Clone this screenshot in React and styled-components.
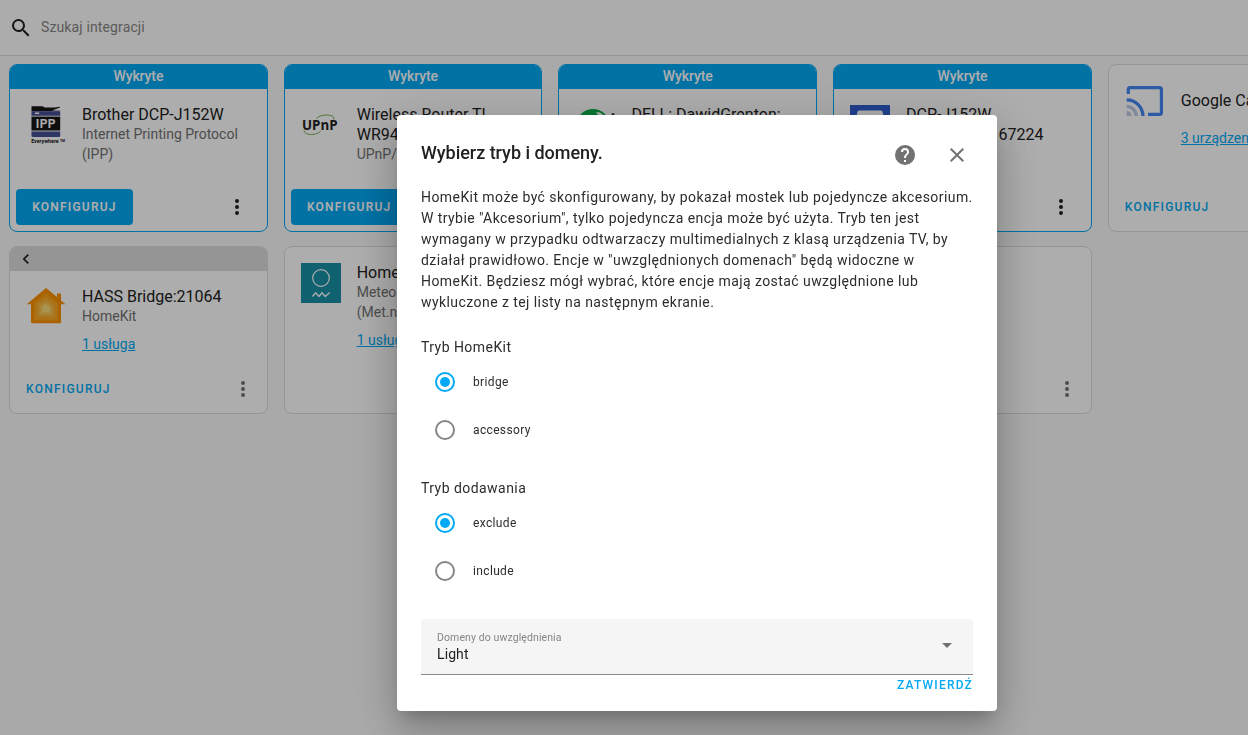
import React from 'react';
import styled, { createGlobalStyle, css } from 'styled-components';

const Global = createGlobalStyle`
  * { box-sizing: border-box; }
  html, body { margin: 0; padding: 0; height: 100%; overflow: hidden; }
  body { font-family: Roboto, "Liberation Sans", sans-serif; background: #fafafa; color: #212121; }
`;

const Page = styled.main`
  height: 735px;
  overflow: hidden;
  background: #fafafa;
`;

const SearchBar = styled.header`
  height: 56px;
  padding: 0 9px;
  display: flex;
  align-items: center;
  gap: 8px;
  background: #fefefe;
  border-bottom: 1px solid #dedede;
  font-size: 14px;
  letter-spacing: 0.13px;
  color: #868686;
`;

const SearchText = styled.span`
  padding-bottom: 2px;
`;

const Icon = styled.svg`
  display: block;
  flex: none;
  width: ${p => p.$size || 24}px;
  height: ${p => p.$size || 24}px;
  fill: ${p => p.$color || '#212121'};
`;

const Grid = styled.section`
  display: grid;
  grid-template-columns: repeat(5, 258.7px);
  grid-auto-rows: 168px;
  gap: 14px 16px;
  padding: 8px 9px;
`;

const Card = styled.article`
  display: flex;
  flex-direction: column;
  border: 1px solid ${p => (p.$discovered ? '#03a9f4' : '#dcdcdc')};
  border-radius: 8px;
  background: #fff;
  overflow: hidden;
`;

const CardHeader = styled.div`
  flex: none;
  height: 24px;
  display: flex;
  align-items: center;
  justify-content: ${p => (p.$discovered ? 'center' : 'flex-start')};
  padding: ${p => (p.$discovered ? '0 0 2px' : '0 6px')};
  background: ${p => (p.$discovered ? '#03a9f4' : '#dcdcdc')};
  color: #fff;
  font-size: 14px;
  font-weight: 500;
  letter-spacing: -0.1px;
`;

const Info = styled.div`
  display: flex;
  gap: 16px;
  padding: ${p => (p.$header ? '15px' : '16px')} 8px 0 16px;
`;

const Logo = styled.div`
  flex: none;
  width: 40px;
  height: 40px;
  svg { display: block; }
`;

const Titles = styled.div`
  align-self: ${p => (p.$top ? 'flex-start' : 'center')};
  min-width: 0;
  padding-top: 1px;
  margin-top: ${p => (p.$up ? '-1px' : '0')};
`;

const Title = styled.div`
  font-size: 16px;
  line-height: 20px;
  white-space: nowrap;
`;

const Sub = styled.div`
  margin-top: -1px;
  font-size: 14px;
  line-height: 20px;
  color: #727272;
  white-space: pre-line;
`;

const Link = styled.a`
  margin: ${p => (p.$tight ? 7 : 8)}px 0 0 72px;
  font-size: 14px;
  line-height: 20px;
  color: #03a9f4;
  text-decoration: underline;
  white-space: nowrap;
`;

const Actions = styled.div`
  min-height: 42px;
  margin-top: auto;
  display: flex;
  align-items: center;
  justify-content: space-between;
  padding: 0 ${p => (p.$discovered ? 18 : 12)}px 6px 6px;
`;

const Button = styled.button`
  height: 36px;
  border: 0;
  border-radius: 4px;
  font: 500 12px/36px Roboto, sans-serif;
  letter-spacing: 1.25px;
  white-space: nowrap;
  ${p =>
    p.$raised
      ? css`width: 117px; padding: 0; background: #03a9f4; color: #fff; font-weight: 600; letter-spacing: 1.2px;`
      : css`padding: 0 10px; background: transparent; color: #03a9f4;`}
`;

const Scrim = styled.div`
  position: fixed;
  inset: 0;
  padding: 115px 0 0 397px;
  background: rgba(0, 0, 0, 0.32);
`;

const Dialog = styled.section`
  width: 600px;
  height: 596px;
  padding: 0 24px;
  border-radius: 4px;
  background: #fff;
  box-shadow: 0 11px 15px -7px rgba(0, 0, 0, 0.2), 0 24px 38px 3px rgba(0, 0, 0, 0.14),
    0 9px 46px 8px rgba(0, 0, 0, 0.12);
  display: flex;
  flex-direction: column;
`;

const DialogHeader = styled.div`
  display: flex;
  align-items: center;
  gap: 28px;
  height: 72px;
  padding: 8px 4px 0 0;
`;

const DialogTitle = styled.h2`
  flex: 1;
  margin: 0 0 4px;
  font-size: 18px;
  font-weight: 500;
  line-height: 24px;
  letter-spacing: -0.03px;
`;

const Description = styled.p`
  margin: 0;
  font-size: 14px;
  line-height: 21px;
  letter-spacing: 0.432px;
  white-space: pre;
  color: #2c2c2c;
`;

const Group = styled.fieldset`
  margin: ${p => p.$gap}px 0 0;
  padding: 0;
  border: 0;
  color: #2c2c2c;
`;

const Legend = styled.div`
  height: 24px;
  padding-top: 1px;
  font-size: 14px;
  line-height: 24px;
  letter-spacing: 0.45px;
`;

const Option = styled.label`
  height: 48px;
  display: flex;
  align-items: center;
  gap: 18px;
  padding-left: 14px;
  font-size: 12px;
  letter-spacing: 0.35px;
`;

const Radio = styled.span`
  width: 20px;
  height: 20px;
  border: 2px solid ${p => (p.$on ? '#03a9f4' : '#868686')};
  border-radius: 50%;
  display: grid;
  place-items: center;
  &::after {
    content: '';
    width: 10px;
    height: 10px;
    border-radius: 50%;
    background: ${p => (p.$on ? '#03a9f4' : 'transparent')};
  }
`;

const Select = styled.div`
  margin-top: 24px;
  height: 56px;
  display: flex;
  align-items: center;
  justify-content: space-between;
  padding: 0 14px 3px 16px;
  background: #f5f5f5;
  border-bottom: 1px solid #8a8a8a;
  border-radius: 4px 4px 0 0;
`;

const SelectLabel = styled.div`
  padding-top: 4px;
  font-size: 10.5px;
  line-height: 14px;
  letter-spacing: 0.1px;
  color: #868686;
`;

const SelectValue = styled.div`
  font-size: 14px;
  line-height: 19px;
  letter-spacing: 0.1px;
`;

const Submit = styled.button`
  align-self: flex-end;
  margin: 0;
  padding: 0;
  border: 0;
  background: none;
  color: #03a9f4;
  font: 500 12px/20px Roboto, sans-serif;
  letter-spacing: 1.2px;
`;

const paths = {
  search:
    'M9.5,3A6.5,6.5 0 0,1 16,9.5C16,11.11 15.41,12.59 14.44,13.73L14.71,14H15.5L20.5,19L19,20.5L14,15.5V14.71L13.73,14.44C12.59,15.41 11.11,16 9.5,16A6.5,6.5 0 0,1 3,9.5A6.5,6.5 0 0,1 9.5,3M9.5,5C7,5 5,7 5,9.5C5,12 7,14 9.5,14C12,14 14,12 14,9.5C14,7 12,5 9.5,5Z',
  close:
    'M19,6.41L17.59,5L12,10.59L6.41,5L5,6.41L10.59,12L5,17.59L6.41,19L12,13.41L17.59,19L19,17.59L13.41,12L19,6.41Z',
  help:
    'M15.07,11.25L14.17,12.17C13.45,12.89 13,13.5 13,15H11V14.5C11,13.39 11.45,12.39 12.17,11.67L13.41,10.41C13.78,10.05 14,9.55 14,9C14,7.89 13.1,7 12,7A2,2 0 0,0 10,9H8A4,4 0 0,1 12,5A4,4 0 0,1 16,9C16,9.88 15.64,10.67 15.07,11.25M13,19H11V17H13M12,2A10,10 0 0,0 2,12A10,10 0 0,0 12,22A10,10 0 0,0 22,12C22,6.47 17.5,2 12,2Z',
  back: 'M15.41,16.58L10.83,12L15.41,7.41L14,6L8,12L14,18L15.41,16.58Z',
  dots:
    'M12,16A2,2 0 0,1 14,18A2,2 0 0,1 12,20A2,2 0 0,1 10,18A2,2 0 0,1 12,16M12,10A2,2 0 0,1 14,12A2,2 0 0,1 12,14A2,2 0 0,1 10,12A2,2 0 0,1 12,10M12,4A2,2 0 0,1 14,6A2,2 0 0,1 12,8A2,2 0 0,1 10,6A2,2 0 0,1 12,4Z',
  down: 'M7,10L12,15L17,10H7Z',
};

const Glyph = ({ name, ...rest }) => (
  <Icon viewBox="0 0 24 24" {...rest}>
    <path d={paths[name]} />
  </Icon>
);

const logoFont = 'Roboto, sans-serif';

const logos = {
  ipp: (
    <svg width="40" height="42" viewBox="0 0 40 42">
      <path d="M5.5 2.2h11l2.2 1.3L29 3.5l4.5-.7.5.6-8 3 8 .3v.6H5.5z" fill="#161616" />
      <path d="M5.5 7.2h28.7v5H5.5z" fill="#454d93" />
      <path d="M9 9.2h4.2" stroke="#fff" strokeWidth="1.4" />
      <path d="M5.5 12.2h28.7" stroke="#ddd" strokeWidth="1" />
      <path d="M5.5 12.8h28.7v13.7H5.5z" fill="#161616" />
      <path d="M5.5 27.6h28.7v3.9a1.5 1.5 0 0 1-1.5 1.5H7a1.5 1.5 0 0 1-1.5-1.5z" fill="#454d93" />
      <text x="19.9" y="23.5" textAnchor="middle" fontFamily={logoFont} fontWeight="700" fontSize="12" letterSpacing="0.4" fill="#fff">IPP</text>
      <text x="5.2" y="39" fontFamily={logoFont} fontWeight="700" fontSize="5.8" textLength="27.5" lengthAdjust="spacingAndGlyphs" fill="#111">Everywhere</text>
      <text x="34" y="37.5" fontFamily={logoFont} fontWeight="700" fontSize="3" textLength="5" lengthAdjust="spacingAndGlyphs" fill="#111">TM</text>
    </svg>
  ),
  upnp: (
    <svg width="40" height="40" viewBox="0 0 40 40">
      <path d="M15.5 14.5C19 10.3 30 10 32.5 13Q33.3 14 32.5 15.5" fill="none" stroke="#76ad58" strokeWidth="1" />
      <path d="M3 26.500C3.5 31.5 14 32 19.5 27.5" fill="none" stroke="#76ad58" strokeWidth="1" />
      <text x="1" y="26" fontFamily='"Open Sans", sans-serif' fontWeight="700" fontSize="14.5" textLength="35.5" lengthAdjust="spacingAndGlyphs" fill="#222">UPnP</text>
    </svg>
  ),
  dell: (
    <svg width="40" height="40" viewBox="0 0 40 40">
      <circle cx="18" cy="22" r="17" fill="#0fb04c" />
      <circle cx="22" cy="15.5" r="7.5" fill="#fff" />
      <path d="M14 8c5-3 9 0 9 5l-9 4z" fill="#0fb04c" />
      <circle cx="38" cy="10.5" r="1.5" fill="#333" />
    </svg>
  ),
  printer: (
    <svg width="40" height="40" viewBox="0 0 40 40">
      <path d="M0 1h40v39H0z" fill="#2f5fd0" />
      <path d="M9 6.5H31Q32.3 6.5 32.6 8L34 14H6L7.4 8Q7.7 6.5 9 6.5z" fill="#fff" />
    </svg>
  ),
  cast: (
    <svg width="40" height="40" viewBox="0 0 40 40" fill="none">
      <path d="M3.3 13V8.5Q3.3 6.6 5.2 6.6H34.5Q36.4 6.6 36.4 8.5V31.5Q36.4 33.4 34.5 33.4H23" stroke="#4285f4" strokeWidth="3.2" />
      <path d="M1.7 18.8A16.2 16.2 0 0 1 17.9 35" stroke="#4285f4" strokeWidth="3.3" />
      <path d="M1.7 25.5A9.5 9.5 0 0 1 11.2 35" stroke="#bdcbe4" strokeWidth="3.3" />
      <path d="M1.7 30A5 5 0 0 1 6.7 35H1.7z" fill="#bdcbe4" />
    </svg>
  ),
  homekit: (
    <svg width="40" height="40" viewBox="0 0 40 40">
      <path d="M20 2L31 11V7.5H35V14.5L39.5 18.3H35V36Q35 37.3 33.7 37.3H6.3Q5 37.3 5 36V18.3H.8z" fill="#fb9000" />
      <path d="M20 7.5L32 17V34.5H8V17z" fill="#fba51b" />
      <path d="M20 11.5L29 18.5V31.5H11V18.5z" fill="#f9b236" />
      <path d="M20 15L26.5 20V29H13.5V20z" fill="#f9c250" />
      <path d="M20 18L24 21V26.5H16V21z" fill="#f6da76" />
    </svg>
  ),
  met: (
    <svg width="40" height="40" viewBox="0 0 40 40" fill="none" stroke="#fff">
      <path d="M0 0h40v40H0z" fill="#1891a6" stroke="none" />
      <circle cx="20" cy="15" r="8.3" strokeWidth="1.2" />
      <path d="M11.5 33.5l3.2-3.7 3.3 3.7 3-3.7 3.2 3.7 4.5-3.9" strokeWidth="1.3" />
    </svg>
  ),
};

const cards = [
  { logo: 'ipp', title: ['Brother DCP-J152W'], sub: 'Internet Printing Protocol\n(IPP)', discovered: true },
  { logo: 'upnp', title: ['Wireless Router TL', 'WR940N'], sub: 'UPnP/IGD', discovered: true },
  { logo: 'dell', title: ['DELL: DawidGrenton:'], discovered: true, top: true },
  { logo: 'printer', title: ['DCP-J152W', '[30055c8a4] 67224'], discovered: true },
  { logo: 'cast', title: ['Google Cast'], link: '3 urządzenia', action: true },
  { logo: 'homekit', title: ['HASS Bridge:21064'], sub: 'HomeKit', link: '1 usługa', action: true, menu: true, back: true },
  { logo: 'met', title: ['Home'], sub: 'Meteorologisk\n(Met.no)', link: '1 usługa' },
  {},
  { menu: true },
];

function IntegrationCard({ logo, title, sub, discovered, link, action, menu, back, top }) {
  return (
    <Card $discovered={discovered}>
      {discovered && <CardHeader $discovered>Wykryte</CardHeader>}
      {back && (
        <CardHeader>
          <Glyph name="back" $size={20} />
        </CardHeader>
      )}
      {title && (
        <Info $header={discovered || back}>
          <Logo>{logos[logo]}</Logo>
          <Titles $up={!discovered && !back} $top={top}>
            {title.map(line => (
              <Title key={line}>{line}</Title>
            ))}
            {sub && <Sub>{sub}</Sub>}
          </Titles>
        </Info>
      )}
      {link && <Link $tight={!sub}>{link}</Link>}
      {(discovered || action || menu) && (
        <Actions $discovered={discovered}>
          {discovered || action ? <Button $raised={discovered}>KONFIGURUJ</Button> : <span />}
          {(discovered || menu) && <Glyph name="dots" $color={discovered ? '#212121' : '#727272'} />}
        </Actions>
      )}
    </Card>
  );
}

function RadioGroup({ label, options, gap }) {
  return (
    <Group $gap={gap}>
      <Legend>{label}</Legend>
      {options.map((option, i) => (
        <Option key={option}>
          <Radio $on={i === 0} />
          {option}
        </Option>
      ))}
    </Group>
  );
}

const description = `HomeKit może być skonfigurowany, by pokazał mostek lub pojedyncze akcesorium.
W trybie "Akcesorium", tylko pojedyncza encja może być użyta. Tryb ten jest
wymagany w przypadku odtwarzaczy multimedialnych z klasą urządzenia TV, by
działał prawidłowo. Encje w "uwzględnionych domenach" będą widoczne w
HomeKit. Będziesz mógł wybrać, które encje mają zostać uwzględnione lub
wykluczone z tej listy na następnym ekranie.`;

export default function App() {
  return (
    <>
      <Global />
      <Page>
        <SearchBar>
          <Glyph name="search" />
          <SearchText>Szukaj integracji</SearchText>
        </SearchBar>
        <Grid>
          {cards.map((card, i) => (
            <IntegrationCard key={i} {...card} />
          ))}
        </Grid>
      </Page>
      <Scrim>
        <Dialog>
          <DialogHeader>
            <DialogTitle>Wybierz tryb i domeny.</DialogTitle>
            <Glyph name="help" $color="#727272" />
            <Glyph name="close" $color="#727272" />
          </DialogHeader>
          <Description>{description}</Description>
          <RadioGroup label="Tryb HomeKit" options={['bridge', 'accessory']} gap={21} />
          <RadioGroup label="Tryb dodawania" options={['exclude', 'include']} gap={21} />
          <Select>
            <div>
              <SelectLabel>Domeny do uwzględnienia</SelectLabel>
              <SelectValue>Light</SelectValue>
            </div>
            <Glyph name="down" $color="#727272" />
          </Select>
          <Submit>ZATWIERDŹ</Submit>
        </Dialog>
      </Scrim>
    </>
  );
}
